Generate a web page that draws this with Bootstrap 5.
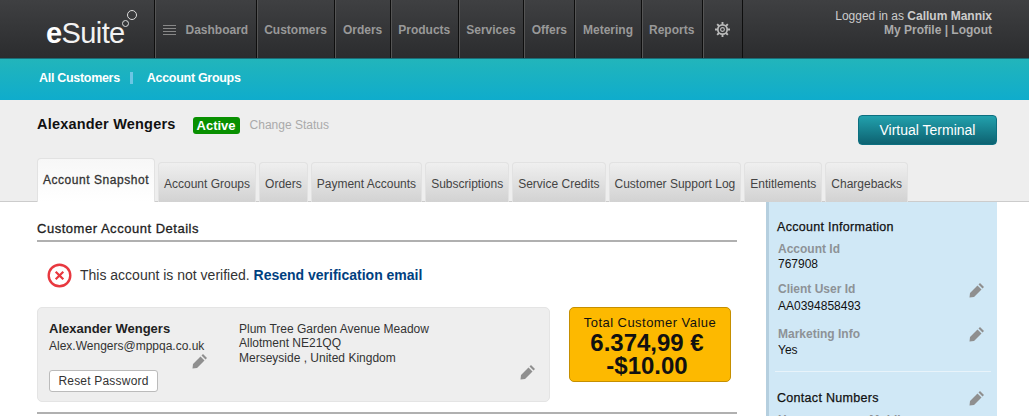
<!doctype html>
<html lang="en"><head><meta charset="utf-8">
<link href="https://cdn.jsdelivr.net/npm/bootstrap@5.3.0/dist/css/bootstrap.min.css" rel="stylesheet">
<style>
html,body{height:416px;overflow:hidden;background:#fff}
body{font-family:"Liberation Sans",Arial,sans-serif;font-size:12px;color:#222}
.topbar{height:59px;background:linear-gradient(#3f4042,#2b2c2e);padding-left:155px;border-bottom:1px solid #1a6d78}
.logo-box{width:155px;margin-left:-155px;height:58px;position:relative;color:#f2f2f2}
.logo-word{position:absolute;left:46px;top:16px;font-size:29px;line-height:34px;letter-spacing:-.6px;font-weight:400}
.logo-word b{font-weight:700;color:#fff}
.logo-ring{position:absolute;border:1px solid #ddd;border-radius:50%}
.mainnav{height:58px;margin-left:-1px}
.mainnav a{display:flex;align-items:center;height:58px;padding:1px 7.5px 0;color:#999;font-weight:700;font-size:12px;text-decoration:none;border-left:1px solid #0e0e0e;box-shadow:inset 1px 0 0 #555;white-space:nowrap}
.mainnav a.last{border-right:1px solid #0e0e0e}
.userbox{margin-left:auto;padding:9px 37px 0 0;text-align:right;color:#aaa;font-weight:700;font-size:12px;line-height:14px}
.userbox b{color:#ccc}
.usertop{font-weight:400;color:#ccc}
.subbar{height:41px;background:linear-gradient(#22b5bb,#0faccc);padding:0 0 3px 39px;font-size:12.5px;font-weight:700;color:#fff;letter-spacing:-.3px}
.subsep{display:inline-block;width:3px;height:12px;background:#6cc6e4;margin:0 14px 0 10px}
.headzone{height:102px;background:#eee;border-bottom:1px solid #ccc;position:relative;padding:0 32px 0 37px}
.custname{font-size:14.5px;font-weight:700;color:#111;letter-spacing:.2px;margin-bottom:1px}
.statuspill{background:#089000;color:#fff;font-weight:700;font-size:13px;line-height:15px;padding:1px 4px;border-radius:3px;margin-left:17px}
.changest{color:#aaa;margin-left:10px}
.vtbtn{width:139px;height:30px;border-radius:4px;border:1px solid #0c6f80;background:linear-gradient(#22a1ad,#0d6271);color:#fff;font-size:14px;line-height:28px;padding:0;text-align:center}
.headrow{height:60px;padding-top:15px}
.namegroup{margin-top:-1px}
.tabrow{position:absolute;left:37px;bottom:-1px;gap:3px;align-items:flex-end}
.tabitem{height:40px;line-height:42px;padding:0 5px;border:1px solid #e2e2e2;border-bottom:0;border-radius:4px 4px 0 0;background:linear-gradient(#efefef,#d2d2d2);color:#444;white-space:nowrap}
.tabitem.current{height:44px;width:118px;line-height:42px;background:linear-gradient(#f7f7f7,#fff);color:#333;font-size:12px;letter-spacing:.55px;text-align:center;padding:0;-webkit-text-stroke:.3px #333}
.bodyzone{padding-left:37px;position:relative}
.leftcol{width:700px;padding-top:19px}
.secthead{font-size:13px;color:#222;line-height:16px;padding-bottom:3px;border-bottom:2px solid #b0b0b0;-webkit-text-stroke:.3px #222;letter-spacing:.52px}
.notice{margin:20px 0 0 10px;font-size:14px;color:#333;gap:8px;height:26px}
.notice a{color:#004080;font-weight:700;text-decoration:none}
.infozone{margin-top:19px;gap:19px}
.infobox{width:513px;height:95px;background:#eee;border:1px solid #e4e4e4;border-radius:5px;position:relative;padding:12px 11px;color:#333}
.infoname{font-weight:700;font-size:13px;color:#222;line-height:18px}
.infomail{line-height:16px}
.addr{position:absolute;left:201px;top:14px;line-height:14.3px}
.resetbtn{position:absolute;left:11px;top:62px;width:109px;height:22px;padding:0;background:#fff;border:1px solid #bbb;border-radius:3px;font-size:12px;color:#333;line-height:20px;letter-spacing:.2px}
.pencil{position:absolute;width:16px;height:16px;fill:#8f8f8f}
.valuebox{width:162px;height:75px;background:#fdb900;border:1px solid #c58f00;border-radius:5px;text-align:center;color:#111;font-size:13px;letter-spacing:.45px;line-height:15px;padding-top:7px}
.valuebig{font-size:24px;font-weight:700;line-height:23px;letter-spacing:0;padding-right:6px;padding-top:1px;margin-bottom:-1px}
.lowline{margin-top:10px;border-top:2px solid #b0b0b0}
.sidepane{position:absolute;left:766px;top:0;width:231px;height:220px;background:#d0e8f6;border-left:3px solid #b5cfdf;padding:17px 0 0 8px;color:#111;font-size:12px}
.sidetitle{font-size:12.5px;-webkit-text-stroke:.25px #111;line-height:16px;letter-spacing:.3px}
.sidelabel{font-weight:700;color:#8d9296;line-height:14px;padding-left:1px}
.sideval{line-height:15px;padding-left:1px}
.sidediv{border-top:1px solid #e8f3fa;margin:13px 6px 0 -2px}
</style></head>
<body>
<div class="topbar d-flex">
<div class="logo-box"><div class="logo-word"><b>e</b>Suite</div><span class="logo-ring" style="left:122px;top:20px;width:7px;height:7px"></span><span class="logo-ring" style="left:127px;top:10px;width:10px;height:10px"></span></div>
<nav class="mainnav d-flex">
<a href="#"><svg width="13" height="10" viewBox="0 0 13 10" style="margin-right:10px"><path d="M0 .5h13M0 3.500h13M0 6.500h13M0 9.500h13" stroke="#888" stroke-width="1"/></svg><span>Dashboard</span></a>
<a href="#">Customers</a><a href="#">Orders</a><a href="#">Products</a><a href="#">Services</a><a href="#">Offers</a><a href="#">Metering</a><a href="#">Reports</a>
<a href="#" class="last" style="padding:0 12px"><svg width="15" height="15" viewBox="0 0 16 16"><circle cx="8" cy="8" r="5" fill="none" stroke="#bbb" stroke-width="1.8"/><circle cx="8" cy="8" r="2" fill="none" stroke="#bbb" stroke-width="1.2"/><path d="M8 0v3M8 13v3M0 8h3M13 8h3M2.300 2.300l2 2M11.700 11.700l2 2M13.700 2.300l-2 2M4.300 11.700l-2 2" stroke="#bbb" stroke-width="2"/></svg></a>
</nav>
<div class="userbox"><div class="usertop">Logged in as <b>Callum Mannix</b></div><div>My Profile | Logout</div></div>
</div>
<div class="subbar d-flex align-items-center"><span>All Customers</span><span class="subsep"></span><span>Account Groups</span></div>
<div class="headzone">
<div class="headrow d-flex align-items-start justify-content-between">
<div class="namegroup d-flex align-items-center"><span class="custname">Alexander Wengers</span><span class="statuspill">Active</span><span class="changest">Change Status</span></div>
<button class="btn vtbtn">Virtual Terminal</button>
</div>
<div class="tabrow d-flex">
<div class="tabitem current">Account Snapshot</div><div class="tabitem">Account Groups</div><div class="tabitem">Orders</div><div class="tabitem">Payment Accounts</div><div class="tabitem">Subscriptions</div><div class="tabitem">Service Credits</div><div class="tabitem">Customer Support Log</div><div class="tabitem">Entitlements</div><div class="tabitem">Chargebacks</div>
</div>
</div>
<div class="bodyzone">
<div class="leftcol">
<div class="secthead">Customer Account Details</div>
<div class="notice d-flex align-items-center"><svg width="25" height="25" viewBox="0 0 25 25"><circle cx="12.500" cy="12.500" r="10.800" fill="#fff" stroke="#e8383f" stroke-width="2.400"/><path d="M8.700 8.700l7.600 7.600M16.300 8.700l-7.600 7.600" stroke="#e8383f" stroke-width="2.200"/></svg><span>This account is not verified. <a href="#">Resend verification email</a></span></div>
<div class="infozone d-flex">
<div class="infobox"><div class="infoname">Alexander Wengers</div><div class="infomail">Alex.Wengers@mppqa.co.uk</div>
<div class="addr">Plum Tree Garden Avenue Meadow<br>Allotment NE21QQ<br>Merseyside , United Kingdom</div>
<button class="resetbtn">Reset Password</button>
<svg class="pencil" style="left:154px;top:45px" viewBox="0 0 16 16"><path d="M11 1l4 4-1.500 1.500-4-4zM8.500 3.500l4 4L5 15 .5 15.500 1 11z"/></svg>
<svg class="pencil" style="left:482px;top:56px" viewBox="0 0 16 16"><path d="M11 1l4 4-1.500 1.500-4-4zM8.500 3.500l4 4L5 15 .5 15.500 1 11z"/></svg>
</div>
<div class="valuebox"><div>Total Customer Value</div><div class="valuebig">6.374,99 €</div><div class="valuebig">-$10.00</div></div>
</div>
<div class="lowline"></div>
</div>
<aside class="sidepane">
<div class="sidetitle">Account Information</div>
<div class="sidelabel" style="margin-top:7px">Account Id</div><div class="sideval" style="margin-top:1px">767908</div>
<div class="sidelabel" style="margin-top:10px">Client User Id</div><div class="sideval" style="margin-top:3px">AA0394858493</div>
<svg class="pencil" style="left:200px;top:80px" viewBox="0 0 16 16"><path d="M11 1l4 4-1.500 1.500-4-4zM8.500 3.500l4 4L5 15 .5 15.500 1 11z"/></svg>
<div class="sidelabel" style="margin-top:13px">Marketing Info</div><div class="sideval" style="margin-top:2px">Yes</div>
<svg class="pencil" style="left:200px;top:124px" viewBox="0 0 16 16"><path d="M11 1l4 4-1.500 1.500-4-4zM8.500 3.500l4 4L5 15 .5 15.500 1 11z"/></svg>
<div class="sidediv"></div>
<div class="sidetitle" style="margin-top:18px">Contact Numbers</div>
<svg class="pencil" style="left:200px;top:188px" viewBox="0 0 16 16"><path d="M11 1l4 4-1.500 1.500-4-4zM8.500 3.500l4 4L5 15 .5 15.500 1 11z"/></svg>
<div class="sidelabel" style="margin-top:7px">Home<span style="margin-left:58px">Mobile</span></div>
</aside>
</div>
<script src="https://cdn.jsdelivr.net/npm/bootstrap@5.3.0/dist/js/bootstrap.bundle.min.js"></script>
</body></html>
